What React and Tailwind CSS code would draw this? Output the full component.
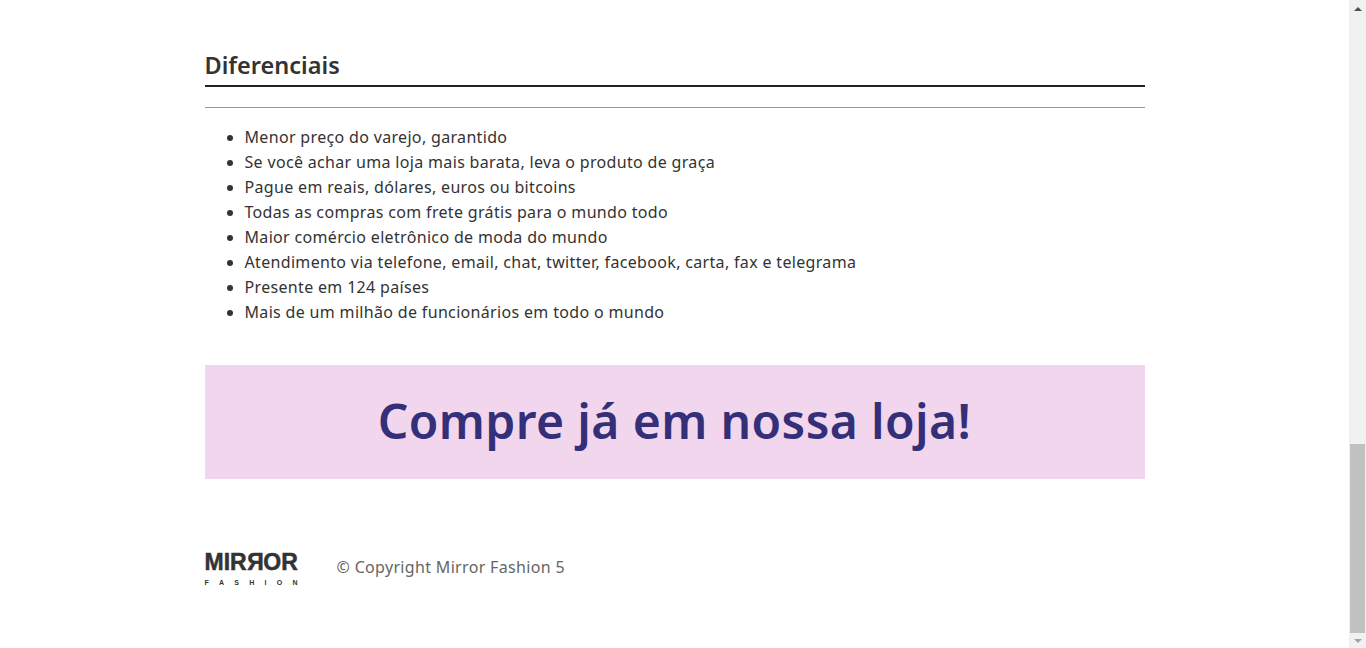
const diferenciais = [
  "Menor preço do varejo, garantido",
  "Se você achar uma loja mais barata, leva o produto de graça",
  "Pague em reais, dólares, euros ou bitcoins",
  "Todas as compras com frete grátis para o mundo todo",
  "Maior comércio eletrônico de moda do mundo",
  "Atendimento via telefone, email, chat, twitter, facebook, carta, fax e telegrama",
  "Presente em 124 países",
  "Mais de um milhão de funcionários em todo o mundo",
];

function Logo() {
  return (
    <div className="w-[93px] pt-[2px] text-[#333] font-['Liberation_Sans',sans-serif]">
      <div className="flex justify-between text-[23px] leading-[22px] font-bold [-webkit-text-stroke:0.5px_#333]">
        <span>M</span>
        <span>I</span>
        <span>R</span>
        <span className="inline-block -scale-x-100">R</span>
        <span>O</span>
        <span>R</span>
      </div>
      <div className="flex justify-between mt-[6px] text-[7px] leading-[8px] font-bold">
        <span>F</span>
        <span>A</span>
        <span>S</span>
        <span>H</span>
        <span>I</span>
        <span>O</span>
        <span>N</span>
      </div>
    </div>
  );
}

function Scrollbar() {
  return (
    <div className="w-[17px] h-[648px] shrink-0 bg-[#f1f1f1] flex flex-col items-center">
      <div className="h-[17px] flex items-center justify-center">
        <div className="w-0 h-0 border-x-[4px] border-x-transparent border-b-[4px] border-b-[#505050]"></div>
      </div>
      <div className="w-[15px] h-[189px] mt-[427px] bg-[#c1c1c1]"></div>
      <div className="h-[15px] flex items-center justify-center">
        <div className="w-0 h-0 border-x-[4px] border-x-transparent border-t-[4px] border-t-[#a3a3a3]"></div>
      </div>
    </div>
  );
}

export default function App() {
  return (
    <div className="flex h-[648px] overflow-hidden bg-white font-['Noto_Sans',sans-serif]">
      <div className="flex-1">
        <div className="w-[940px] mx-auto pt-[49px]">
          <h2 className="text-[23.5px] leading-[32px] font-semibold text-[#333] border-b-2 border-[#222] pb-[4px]">
            Diferenciais
          </h2>
          <hr className="mt-[20px] border-[#999]" />
          <ul className="list-disc pl-10 mt-[17px] text-[#333] text-[16px] leading-[25px] tracking-[0.33px]">
            {diferenciais.map((item) => (
              <li key={item}>{item}</li>
            ))}
          </ul>
          <div className="mt-[40px] h-[114px] bg-[#f2d6ee] flex items-center justify-center text-[#333079] text-[48px] font-semibold tracking-[0.4px] pb-[2px]">
            Compre já em nossa loja!
          </div>
          <div className="mt-[70px] flex items-center">
            <Logo />
            <p className="ml-[39px] mb-[2px] text-[#666] text-[16px] tracking-[0.33px]">© Copyright Mirror Fashion 5</p>
          </div>
        </div>
      </div>
      <Scrollbar />
    </div>
  );
}
